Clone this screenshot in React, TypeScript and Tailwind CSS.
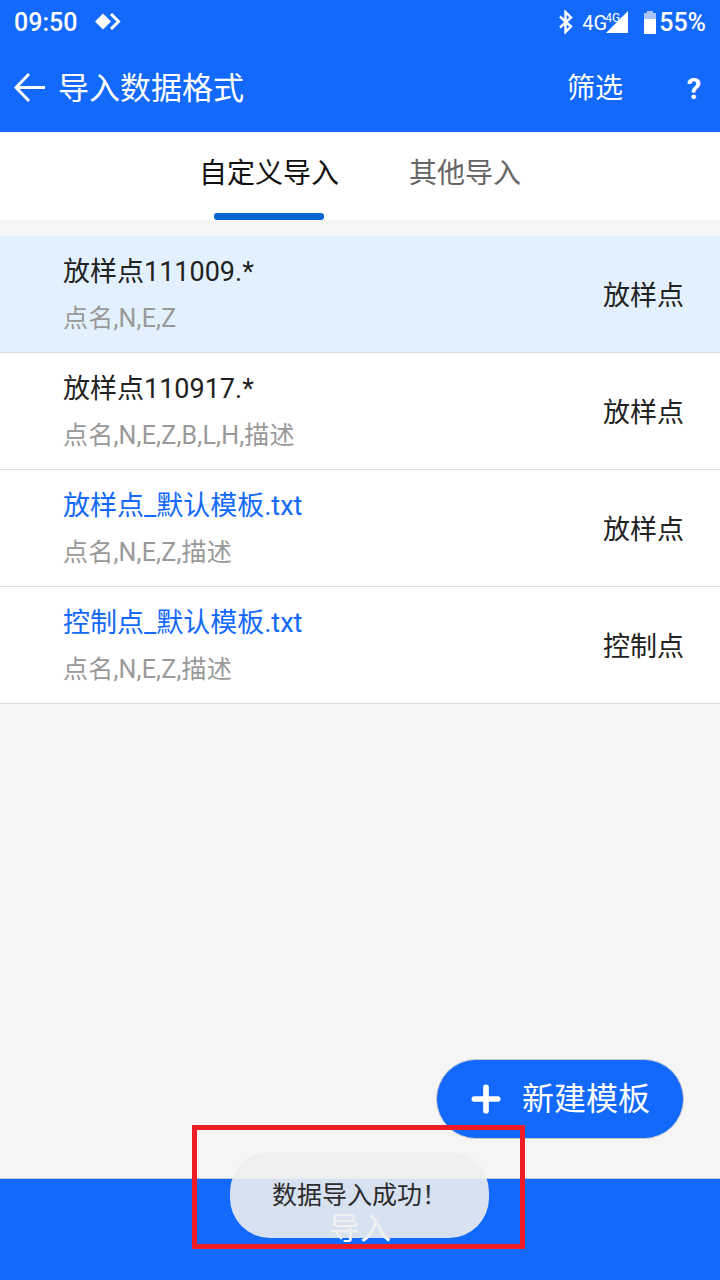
import React from 'react'
import { Plus } from 'lucide-react'

const font = "font-['Roboto','Noto_Sans_CJK_SC',sans-serif]"

const rows = [
  { name: '放样点111009.*', fields: '点名,N,E,Z', type: '放样点', active: true, blue: false },
  { name: '放样点110917.*', fields: '点名,N,E,Z,B,L,H,描述', type: '放样点', active: false, blue: false },
  { name: '放样点_默认模板.txt', fields: '点名,N,E,Z,描述', type: '放样点', active: false, blue: true },
  { name: '控制点_默认模板.txt', fields: '点名,N,E,Z,描述', type: '控制点', active: false, blue: true },
]

const StatusBar = () => {
  return (
    <div className="h-[44px] flex items-center justify-between pl-[14px] pr-[14px] text-white">
      <div className="flex items-center">
        <span className="text-[25px] font-medium leading-none">09:50</span>
        <svg className="ml-[17px]" width="27" height="20" viewBox="0 0 27 20" fill="none">
          <path d="M9 1.5 L17 9.5 L9 17.5 L1 9.5 Z" fill="white" />
          <path d="M17 2 L24.5 9.5 L17 17" stroke="white" strokeWidth="3" />
        </svg>
      </div>
      <div className="flex items-center">
        <svg width="18" height="24" viewBox="0 0 18 24" fill="none">
          <path d="M3 6.5 L14 16.5 L8.5 22 V2 L14 7.5 L3 17.5" stroke="white" strokeWidth="2.4" />
        </svg>
        <div className="ml-[7px] relative w-[46px] h-[24px]">
          <svg className="absolute right-0 top-[1px]" width="22" height="22" viewBox="0 0 22 22">
            <path d="M22 0 V22 H0 Z" fill="white" />
          </svg>
          <span className="absolute left-0 top-[2px] text-[20px] leading-[22px]">4G</span>
          <span className="absolute left-[23px] top-[1px] text-[12px] leading-[14px]">4G</span>
        </div>
        <div className="ml-[15px] w-[13px] h-[23px] flex flex-col items-center">
          <div className="w-[6px] h-[2px] bg-[#a9c6f7]" />
          <div className="w-[12px] h-[6px] bg-[#a9c6f7]" />
          <div className="w-[12px] h-[15px] bg-white" />
        </div>
        <span className="ml-[3px] text-[25px] font-medium leading-none">55%</span>
      </div>
    </div>
  )
}

const App = () => {
  return (
    <div className={`relative w-[720px] h-[1280px] overflow-hidden flex flex-col bg-[#f5f5f5] ${font}`}>
      <div className="bg-[#1269fb]">
        <StatusBar />
        <div className="h-[88px] flex items-center text-white">
          <svg className="ml-[14px]" width="32" height="32" viewBox="0 0 32 32" fill="none">
            <path d="M15 2 L2 15.5 L15 29 M2 15.5 H31" stroke="white" strokeWidth="3" />
          </svg>
          <span className="ml-[12px] text-[31px] leading-none">导入数据格式</span>
          <span className="ml-auto pt-[2px] text-[28px] leading-none">筛选</span>
          <span className="ml-[63px] mr-[18px] pt-[2px] w-[16px] text-center text-[29px] font-bold leading-none">?</span>
        </div>
      </div>

      <div className="h-[88px] bg-white flex">
        <div className="ml-[199px] flex flex-col items-center">
          <span className="mt-[25px] text-[28px] leading-[34px] text-[#111]">自定义导入</span>
          <div className="mt-auto w-[110px] h-[7px] rounded-[3px] bg-[#0766cf]" />
        </div>
        <span className="ml-[70px] mt-[25px] text-[28px] leading-[34px] text-[#666]">其他导入</span>
      </div>

      <div className="mt-[16px] flex flex-col">
        {rows.map((row) => (
          <div
            key={row.name}
            className={`h-[117px] pt-[2px] border-b border-[#dcdcdc] flex items-center pl-[63px] pr-[36px] ${row.active ? 'bg-[#e3f0fd]' : 'bg-white'}`}
          >
            <div className="flex-1 flex flex-col">
              <span className={`text-[27px] leading-[36px] ${row.blue ? 'text-[#1269fb]' : 'text-[#222]'}`}>{row.name}</span>
              <span className="mt-[11px] text-[25px] leading-[36px] tracking-[0.2px] text-[#999]">{row.fields}</span>
            </div>
            <span className="pt-[2px] text-[27px] leading-none text-[#222]">{row.type}</span>
          </div>
        ))}
      </div>

      <div className="flex-1 flex flex-col items-end justify-end pr-[36px] pb-[39px]">
        <div className="w-[248px] h-[80px] rounded-[40px] bg-[#1269fb] border border-[#c4c8d0] flex items-center pl-[29px] text-white">
          <Plus size={40} strokeWidth={3.4} />
          <span className="ml-[16px] text-[32px] leading-none">新建模板</span>
        </div>
      </div>

      <div className="h-[102px] bg-[#1269fb] border-t border-[#c4c8d0] flex justify-center pt-[30px]">
        <span className="text-[31px] leading-[40px] text-white">导入</span>
      </div>

      {/* toast */}
      <div className="absolute left-[230px] top-[1152px] w-[259px] h-[86px] rounded-[40px] bg-[#eeeeee]/90 flex items-center justify-center">
        <span className="text-[25px] leading-none text-[#2c2c2c]">数据导入成功！</span>
      </div>

      {/* red annotation box */}
      <div className="absolute left-[192px] top-[1125px] w-[333px] h-[124px] border-[5px] border-[#ee1c25]" />
    </div>
  )
}

export default App
